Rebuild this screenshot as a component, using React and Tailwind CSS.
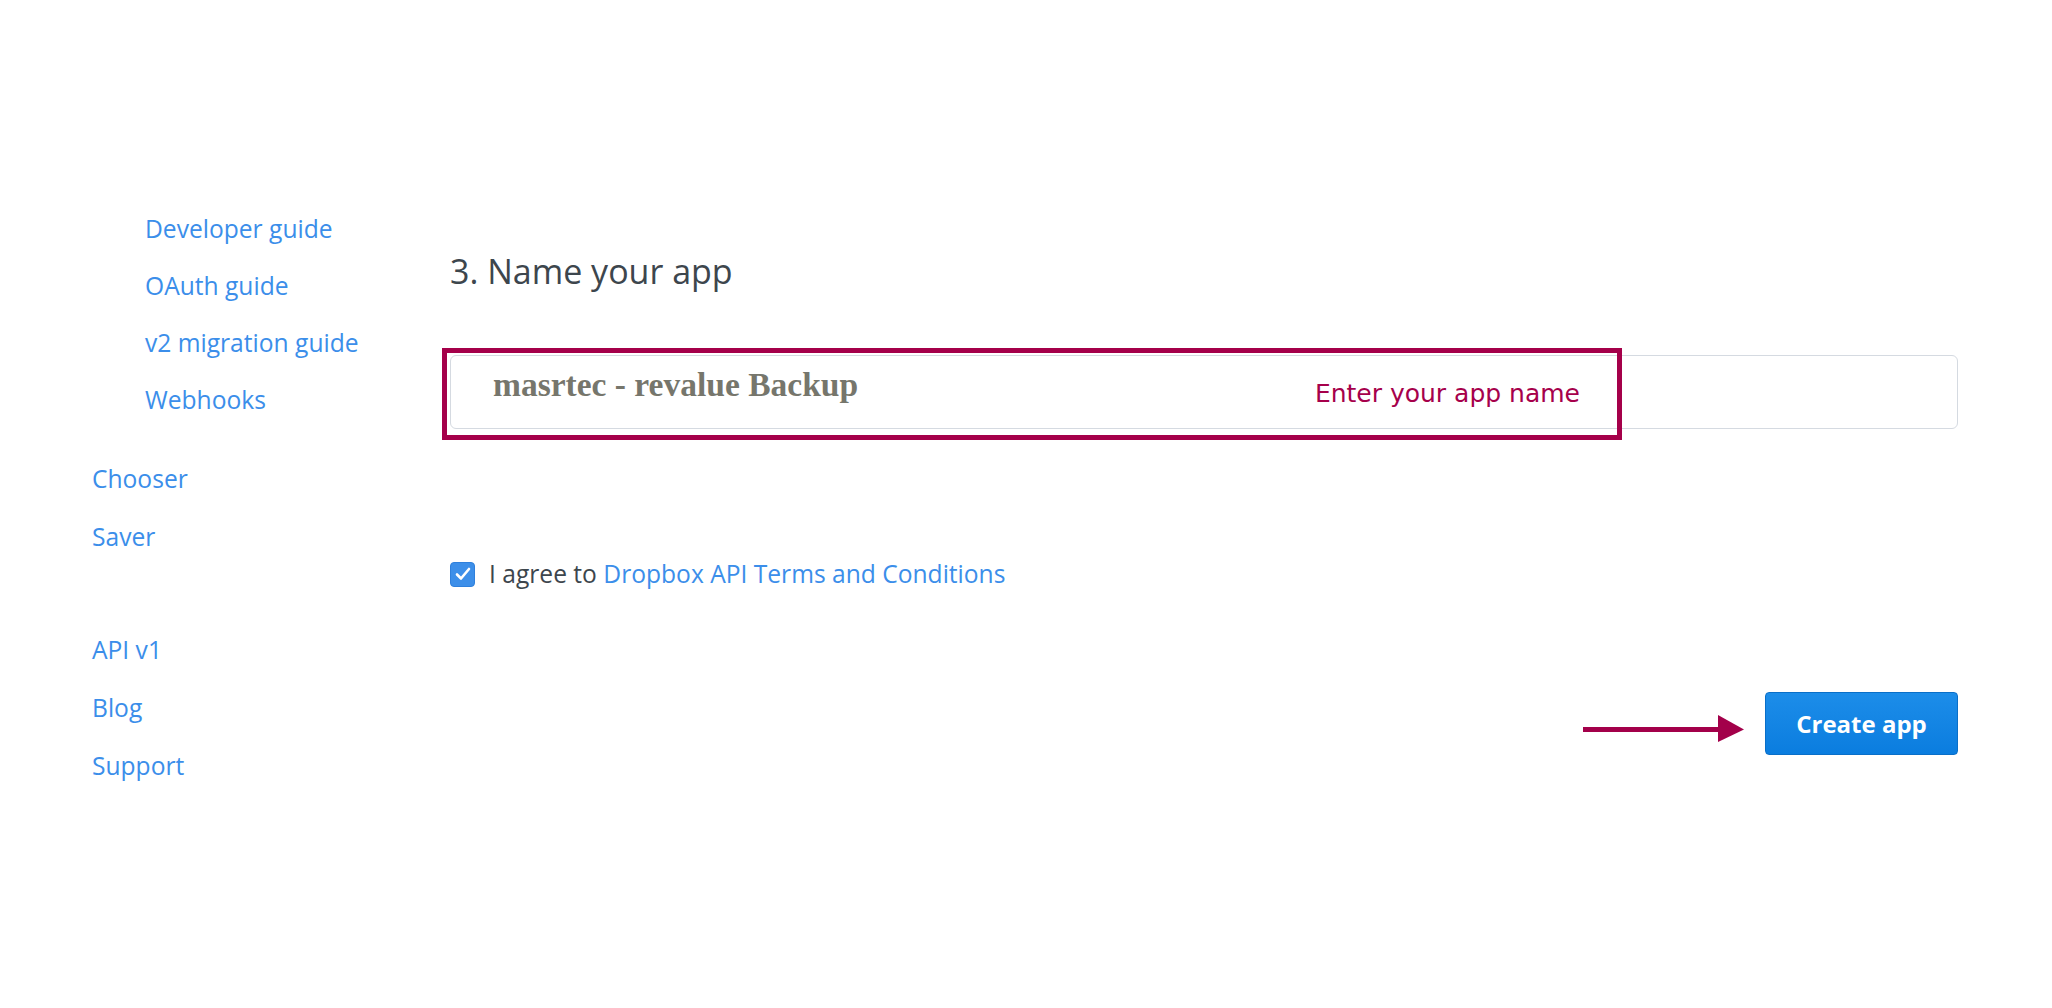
import React from "react";

const sans = { fontFamily: '"Open Sans", "Liberation Sans", sans-serif' };

const groups = [
  { indent: true, lead: "leading-[57px]", mt: "", items: ["Developer guide", "OAuth guide", "v2 migration guide", "Webhooks"] },
  { indent: false, lead: "leading-[58px]", mt: "mt-[22px]", items: ["Chooser", "Saver"] },
  { indent: false, lead: "leading-[58px]", mt: "mt-[55px]", items: ["API v1", "Blog", "Support"] },
];

function Arrow() {
  return (
    <svg width="161" height="40" viewBox="0 0 161 40" className="shrink-0">
      <line x1="0" y1="25.5" x2="140" y2="25.5" stroke="#a3004a" strokeWidth="5" />
      <polygon points="135,11 161,25.5 135,38" fill="#a3004a" />
    </svg>
  );
}

export default function App() {
  return (
    <div className="flex h-[1008px] w-full bg-white text-[24.6px]" style={sans}>
      {/* sidebar */}
      <nav className="w-[450px] shrink-0 pl-[92px] pt-[200px]">
        {groups.map((g, gi) => (
          <ul key={gi} className={`${g.mt} ${g.indent ? "pl-[53px]" : ""}`}>
            {g.items.map((it) => (
              <li key={it} className={`${g.lead} text-[#3b8eea]`}>
                <a href="#">{it}</a>
              </li>
            ))}
          </ul>
        ))}
      </nav>

      {/* main */}
      <main className="flex-1 pr-[94px] pt-[251px]">
        <h2 className="text-[34px] leading-[40px] text-[#3d464d]">3. Name your app</h2>

        <div className="relative mt-[64px] h-[74px] w-full rounded-[6px] border border-[#d5dae1] bg-white">
          <div
            className="pl-[42px] pt-[11px] text-[33.5px] font-bold leading-[36px] text-[#76766c]"
            style={{ fontFamily: '"Liberation Serif", serif' }}
          >
            masrtec - revalue Backup
          </div>
          <div className="absolute -left-[9px] -top-[8px] flex h-[92px] w-[1180px] items-center justify-end border-[5px] border-[#a5004a] pr-[37px]">
            <span
              className="text-[25px] text-[#a6004b]"
              style={{ fontFamily: '"Comic Sans MS", "DejaVu Sans", sans-serif' }}
            >
              Enter your app name
            </span>
          </div>
        </div>

        <label className="mt-[129px] flex items-center leading-[32px]">
          <span className="flex h-[25px] w-[25px] items-center justify-center rounded-[4px] border border-[#2f80dc] bg-[#3d8fe9]">
            <svg width="16" height="14" viewBox="0 0 16 14">
              <path d="M2 7.5 L6 11.5 L14 2" fill="none" stroke="white" strokeWidth="2.6" strokeLinecap="round" strokeLinejoin="round" />
            </svg>
          </span>
          <span className="ml-[14px] text-[#3d464d]">
            I agree to <a href="#" className="text-[#3b8eea]">Dropbox API Terms and Conditions</a>
          </span>
        </label>

        <div className="mt-[102px] flex items-center justify-end gap-[21px]">
          <Arrow />
          <button className="h-[63px] w-[193px] rounded-[4px] border border-[#0a6fc8] bg-gradient-to-b from-[#1c8de9] to-[#0a7ddf] text-[24px] font-bold text-white">
            Create app
          </button>
        </div>
      </main>
    </div>
  );
}
